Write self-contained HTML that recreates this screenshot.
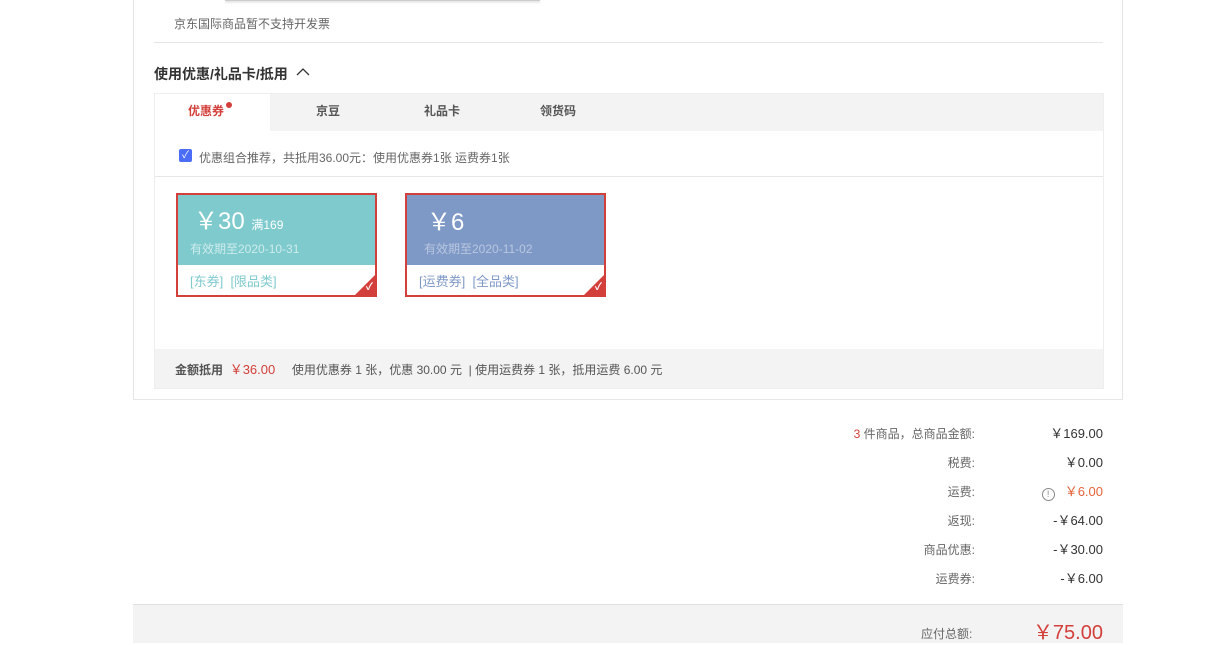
<!DOCTYPE html><html><head><meta charset="utf-8"><style>
*{margin:0;padding:0;box-sizing:border-box}
body{width:1213px;height:643px;background:#fff;font-family:"Liberation Sans","Noto Sans CJK SC",sans-serif;font-size:12px;color:#666;position:relative;overflow:hidden}
.a{position:absolute}
.c{position:absolute;width:201px;height:104px;border:2px solid #d33f3a;background:#fff}
.c .t{height:70px;color:#fff}
.c .tri{position:absolute;right:0;bottom:0;width:0;height:0;border-left:20px solid transparent;border-bottom:20px solid #d33f3a}
.c .ck{position:absolute;right:2px;bottom:1px;color:#fff;font-size:10px;line-height:12px;font-weight:bold}
.row{position:absolute;left:0;width:1213px;height:16px}
.row .l{position:absolute;right:238px;color:#666;top:1px}
.row .v{position:absolute;right:110px;color:#333;font-size:13px;top:-1px}
</style></head><body>
<div class="a" style="left:133px;top:0;width:990px;height:400px;border:1px solid #e6e6e6;border-top:none"></div>
<div class="a" style="left:225px;top:0;width:315px;height:1px;background:#ccc;box-shadow:0 1px 2px #bbb"></div>
<div class="a" style="left:174px;top:15px;font-size:12px;color:#666">京东国际商品暂不支持开发票</div>
<div class="a" style="left:154px;top:42px;width:949px;height:1px;background:#e6e6e6"></div>
<div class="a" style="left:154px;top:64px;font-size:14px;font-weight:bold;color:#333">使用优惠/礼品卡/抵用</div>
<svg class="a" style="left:296px;top:67px" width="14" height="10"><path d="M1 8 L7 2 L13 8" fill="none" stroke="#333" stroke-width="1.3"/></svg>
<div class="a" style="left:154px;top:93px;width:950px;height:296px;border:1px solid #eee"></div>
<div class="a" style="left:155px;top:94px;width:948px;height:37px;background:#f3f3f3"></div>
<div class="a" style="left:155px;top:94px;width:115px;height:37px;background:#fff"></div>
<div class="a" style="left:188px;top:102px;font-weight:bold;color:#d33f3a">优惠券</div>
<div class="a" style="left:226px;top:102px;width:6px;height:6px;border-radius:50%;background:#d33f3a"></div>
<div class="a" style="left:316px;top:102px;font-weight:bold;color:#555">京豆</div>
<div class="a" style="left:424px;top:102px;font-weight:bold;color:#555">礼品卡</div>
<div class="a" style="left:540px;top:102px;font-weight:bold;color:#555">领货码</div>
<div class="a" style="left:179px;top:149px;width:13px;height:13px;border-radius:2px;background:#4a6cf7;color:#fff;font-size:10px;line-height:13px;text-align:center">✓</div>
<div class="a" style="left:199px;top:149px;color:#666">优惠组合推荐，共抵用36.00元：使用优惠券1张 运费券1张</div>
<div class="a" style="left:155px;top:176px;width:948px;height:1px;background:#e6e6e6"></div>
<div class="c" style="left:176px;top:193px"><div class="t" style="background:#7fcacd"><div class="a" style="left:16px;top:6px;font-size:24px">￥30 <span style="font-size:12px;font-weight:normal">满169</span></div><div class="a" style="left:12px;top:45px;color:#cdeced;font-size:12px">有效期至2020-10-31</div></div><div class="a" style="left:12px;top:76px;color:#7fcacd;font-size:13px">[东券]&nbsp; [限品类]</div><div class="tri"></div><div class="ck">✓</div></div>
<div class="c" style="left:405px;top:193px"><div class="t" style="background:#7f99c7"><div class="a" style="left:20px;top:7px;font-size:24px">￥6</div><div class="a" style="left:17px;top:45px;color:#b8c6e0;font-size:12px">有效期至2020-11-02</div></div><div class="a" style="left:12px;top:76px;color:#7f99c7;font-size:13px">[运费券]&nbsp; [全品类]</div><div class="tri"></div><div class="ck">✓</div></div>
<div class="a" style="left:155px;top:349px;width:948px;height:39px;background:#f3f3f3"></div>
<div class="a" style="left:175px;top:359px;color:#555"><b>金额抵用</b>&nbsp; <span style="color:#d33f3a;font-size:13px">￥36.00</span>&nbsp;&nbsp;&nbsp;&nbsp; 使用优惠券 1 张，优惠 30.00 元 &nbsp;| 使用运费券 1 张，抵用运费 6.00 元</div>
<div class="row" style="top:424px"><span class="l"><span style="color:#d33f3a">3</span> 件商品，总商品金额:</span><span class="v">￥169.00</span></div>
<div class="row" style="top:453px"><span class="l">税费:</span><span class="v">￥0.00</span></div>
<div class="row" style="top:482px"><span class="l">运费:</span><span class="v" style="color:#e4643b"><span style="display:inline-block;width:13px;height:13px;border:1px solid #888;border-radius:50%;font-size:9px;line-height:11px;text-align:center;color:#888;margin-right:10px;vertical-align:-1px">!</span>￥6.00</span></div>
<div class="row" style="top:511px"><span class="l">返现:</span><span class="v">-￥64.00</span></div>
<div class="row" style="top:540px"><span class="l">商品优惠:</span><span class="v">-￥30.00</span></div>
<div class="row" style="top:569px"><span class="l">运费券:</span><span class="v">-￥6.00</span></div>
<div class="a" style="left:133px;top:604px;width:990px;height:39px;background:#f3f3f3;border-top:1px solid #e0e0e0"></div>
<div class="a" style="left:921px;top:625px;color:#666">应付总额:</div>
<div class="a" style="right:110px;top:616px;color:#d33f3a;font-size:20px">￥75.00</div>
</body></html>
